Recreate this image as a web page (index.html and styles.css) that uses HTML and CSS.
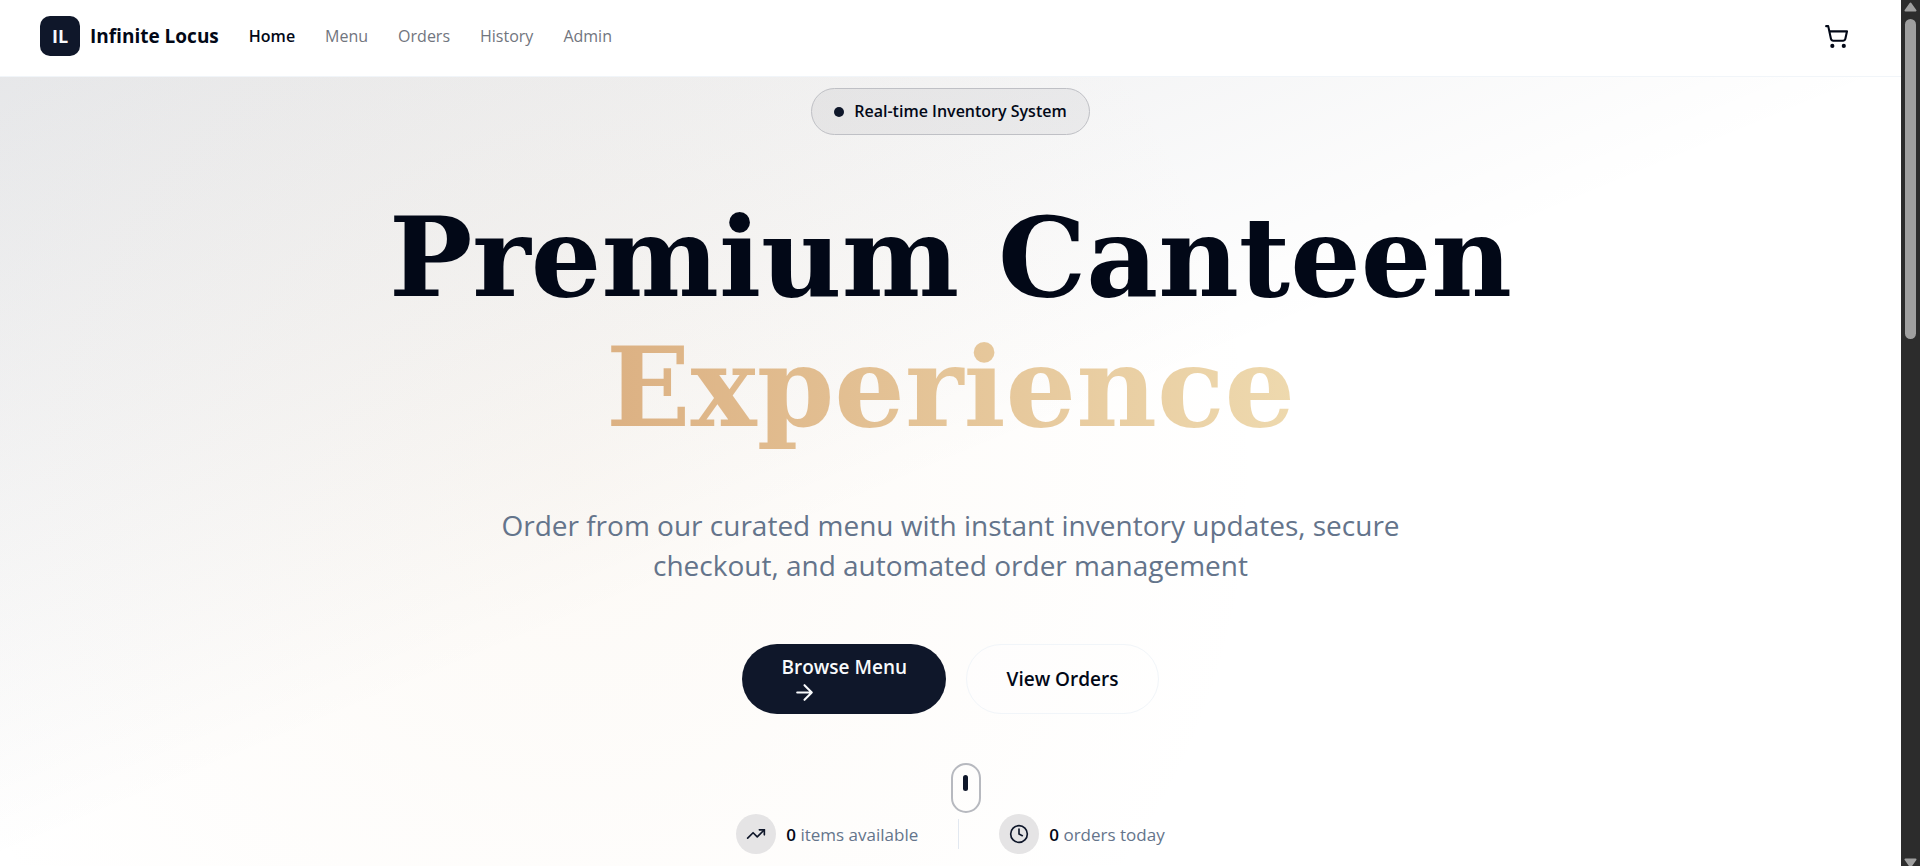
FILE: index.html
```html
<!DOCTYPE html>
<html lang="en">
<head>
<meta charset="utf-8">
<meta name="viewport" content="width=device-width, initial-scale=1">
<title>Infinite Locus</title>
<link rel="stylesheet" href="styles.css">
</head>
<body>
<div class="window">
  <div class="page">
    <header class="header">
      <a class="brand" href="#"><span class="brand-mark">IL</span><span>Infinite Locus</span></a>
      <nav class="nav">
        <a class="nav-link active" href="#">Home</a>
        <a class="nav-link" href="#">Menu</a>
        <a class="nav-link" href="#">Orders</a>
        <a class="nav-link" href="#">History</a>
        <a class="nav-link" href="#">Admin</a>
      </nav>
      <button class="cart" type="button" aria-label="Cart">
        <svg class="icon" viewBox="0 0 24 24"><circle cx="8" cy="21" r="1"/><circle cx="19" cy="21" r="1"/><path d="M2.05 2.05h2l2.66 12.42a2 2 0 0 0 2 1.58h9.78a2 2 0 0 0 1.95-1.57l1.65-7.43H5.12"/></svg>
      </button>
    </header>
    <main class="hero">
      <p class="pill"><span class="dot"></span>Real-time Inventory System</p>
      <h1 class="title">Premium Canteen <span class="accent">Experience</span></h1>
      <p class="lead">Order from our curated menu with instant inventory updates, secure checkout, and automated order management</p>
      <div class="actions">
        <button class="btn primary" type="button">Browse Menu <svg class="icon arrow" viewBox="0 0 24 24"><path d="M5 12h14M12 5l7 7-7 7"/></svg></button>
        <button class="btn outline" type="button">View Orders</button>
      </div>
      <div class="stats">
        <div class="stat">
          <span class="badge"><svg class="icon small" viewBox="0 0 24 24"><path d="M22 7l-8.5 8.5-5-5L2 17"/><path d="M16 7h6v6"/></svg></span>
          <span><strong>0</strong> items available</span>
        </div>
        <div class="divider"></div>
        <div class="stat">
          <span class="badge"><svg class="icon small" viewBox="0 0 24 24"><circle cx="12" cy="12" r="10"/><path d="M12 6v6l4 2"/></svg></span>
          <span><strong>0</strong> orders today</span>
        </div>
      </div>
      <div class="mouse"><span class="wheel"></span></div>
    </main>
  </div>
  <div class="scrollbar" aria-hidden="true">
    <svg class="scroll-arrow" viewBox="0 0 13 10"><path d="M6.500 1.500L11.500 8.500H1.500z"/></svg>
    <div class="thumb"></div>
    <svg class="scroll-arrow down" viewBox="0 0 13 10"><path d="M1.500 1.500H11.500L6.500 8.500z"/></svg>
  </div>
</div>
</body>
</html>
```
FILE: styles.css
```css
* { box-sizing: border-box; }

body {
  margin: 0;
  background: #fff;
  color: #020817;
  font-family: "Open Sans", "Noto Sans", sans-serif;
  font-size: 16px;
  overflow: hidden;
}

a { color: inherit; text-decoration: none; }
button { font: inherit; color: inherit; }

.window { display: flex; height: 100vh; overflow: hidden; }
.page { flex: 1; display: flex; flex-direction: column; min-width: 0; }

.icon {
  width: 25px;
  height: 25px;
  fill: none;
  stroke: currentColor;
  stroke-width: 2;
  stroke-linecap: round;
  stroke-linejoin: round;
}
.icon.small { width: 20px; height: 20px; }

.header {
  display: flex;
  align-items: center;
  gap: 30px;
  padding: 11px 40px 15px;
  border-bottom: 1px solid #f1f5f9;
  background: #fff;
}
.brand { display: flex; align-items: center; gap: 10px; font-size: 19px; font-weight: 700; }
.brand-mark {
  display: grid;
  place-items: center;
  width: 40px;
  height: 40px;
  border-radius: 10px;
  background: #0f172a;
  color: #f8fafc;
  font-size: 18px;
}
.nav { display: flex; gap: 30px; color: #71757e; }
.nav-link.active { color: #020817; font-weight: 600; }
.cart {
  display: grid;
  place-items: center;
  width: 50px;
  height: 50px;
  margin-left: auto;
  padding: 0;
  border: 0;
  background: none;
}

.hero {
  position: relative;
  flex: 1;
  display: flex;
  flex-direction: column;
  align-items: center;
  padding-top: 11px;
  background:
    radial-gradient(circle at 30% 50%, rgba(222, 184, 135, 0.08), transparent 50%),
    linear-gradient(to bottom right, rgba(15, 23, 42, 0.1), transparent 50%);
}
.pill {
  display: flex;
  align-items: center;
  gap: 10px;
  margin: 0 0 57px;
  padding: 0 22px;
  border: 1px solid #bfc0c5;
  border-radius: 24px;
  background: rgba(15, 23, 42, 0.05);
  font-weight: 600;
  line-height: 45px;
}
.dot { width: 10px; height: 10px; border-radius: 50%; background: #0f172a; }

.title {
  max-width: 1200px;
  margin: 0 0 53px;
  font-family: "DejaVu Serif", serif;
  font-size: 111px;
  font-weight: 700;
  line-height: 130px;
  text-align: center;
}
.accent {
  display: block;
  width: fit-content;
  margin: 0 auto;
  background: linear-gradient(to right, #dcb183, #eed9ae);
  background-clip: text;
  -webkit-background-clip: text;
  color: transparent;
}
.lead {
  max-width: 960px;
  margin: 0;
  color: #64748b;
  font-size: 28px;
  line-height: 40px;
  text-align: center;
}
.actions { display: flex; gap: 20px; margin: 59px 0 100px; }
.btn { padding: 0 40px; border: 0; border-radius: 35px; height: 70px; font-size: 19px; font-weight: 600; }
.primary { width: 204px; padding-right: 36px; background: #0f172a; color: #f8fafc; text-align: left; line-height: 26px; }
.arrow { display: block; margin-left: 10px; }
.outline { border: 1px solid #f1f5f9; background: rgba(255, 255, 255, 0.3); }

.stats { display: flex; align-items: center; gap: 40px; color: #64748b; font-size: 17px; }
.stat { display: flex; align-items: center; gap: 10px; }
.stat strong { color: #020817; font-weight: 600; }
.badge {
  display: grid;
  place-items: center;
  width: 40px;
  height: 40px;
  border-radius: 50%;
  background: #e5e4e5;
  color: #0f172a;
}
.divider { width: 1px; height: 30px; background: #e2e8f0; }

.mouse {
  position: absolute;
  bottom: 53px;
  left: 50%;
  display: flex;
  justify-content: center;
  width: 30px;
  height: 50px;
  padding-top: 10px;
  border: 2px solid #b7b9bf;
  border-radius: 15px;
}
.wheel { width: 5px; height: 16px; border-radius: 3px; background: #0f172a; }

.scrollbar {
  display: flex;
  flex-direction: column;
  align-items: center;
  width: 19px;
  padding-top: 2px;
  background: #2c2c2c;
}
.scroll-arrow {
  width: 13px;
  height: 10px;
  fill: #9f9f9f;
  stroke: #9f9f9f;
  stroke-width: 2;
  stroke-linejoin: round;
}
.thumb { width: 11px; height: 37%; margin-top: 7px; border-radius: 6px; background: #9f9f9f; }
.down { margin: auto 0 -2px; }
```
